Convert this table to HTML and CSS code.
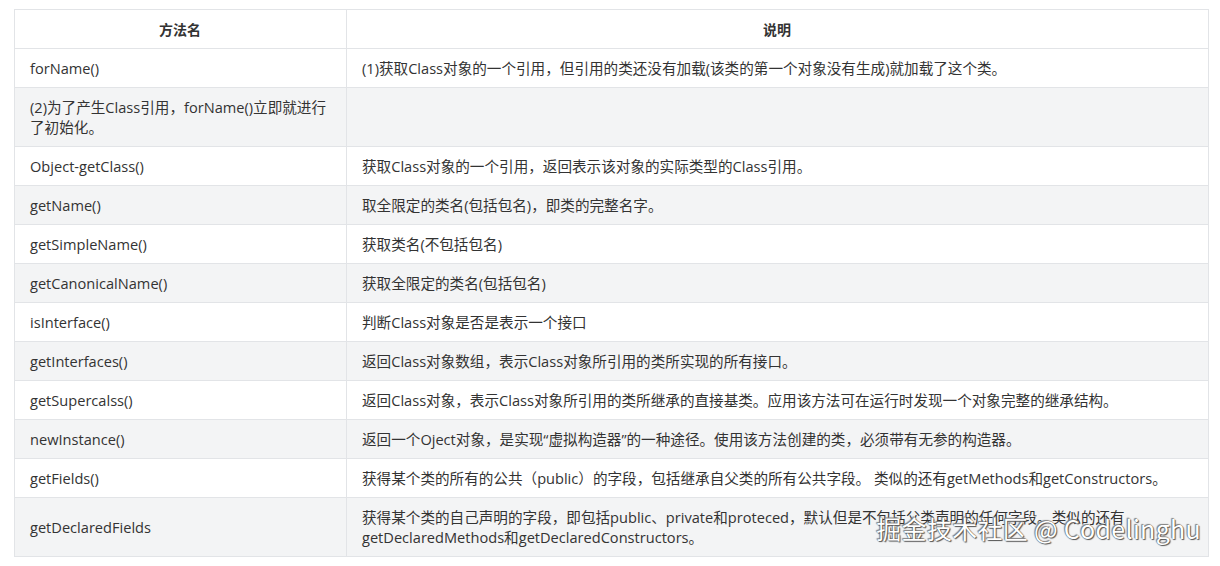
FILE: index.html
```html
<!DOCTYPE html>
<html lang="zh-CN">
<head>
<meta charset="utf-8">
<title>Class 方法</title>
<link rel="stylesheet" href="styles.css">
</head>
<body>
<div class="page">
  <table class="tbl">
    <thead>
      <tr><th class="c1">方法名</th><th>说明</th></tr>
    </thead>
    <tbody>
      <tr><td>forName()</td><td>(1)获取Class对象的一个引用，但引用的类还没有加载(该类的第一个对象没有生成)就加载了这个类。</td></tr>
      <tr><td class="nw">(2)为了产生Class引用，forName()立即就进行<br>了初始化。</td><td></td></tr>
      <tr><td>Object-getClass()</td><td>获取Class对象的一个引用，返回表示该对象的实际类型的Class引用。</td></tr>
      <tr><td>getName()</td><td>取全限定的类名(包括包名)，即类的完整名字。</td></tr>
      <tr><td>getSimpleName()</td><td>获取类名(不包括包名)</td></tr>
      <tr><td>getCanonicalName()</td><td>获取全限定的类名(包括包名)</td></tr>
      <tr><td>isInterface()</td><td>判断Class对象是否是表示一个接口</td></tr>
      <tr><td>getInterfaces()</td><td>返回Class对象数组，表示Class对象所引用的类所实现的所有接口。</td></tr>
      <tr><td>getSupercalss()</td><td>返回Class对象，表示Class对象所引用的类所继承的直接基类。应用该方法可在运行时发现一个对象完整的继承结构。</td></tr>
      <tr><td>newInstance()</td><td>返回一个Oject对象，是实现“虚拟构造器”的一种途径。使用该方法创建的类，必须带有无参的构造器。</td></tr>
      <tr><td>getFields()</td><td>获得某个类的所有的公共（public）的字段，包括继承自父类的所有公共字段。 类似的还有getMethods和getConstructors。</td></tr>
      <tr><td>getDeclaredFields</td><td class="nw">获得某个类的自己声明的字段，即包括public、private和proteced，默认但是不包括父类声明的任何字段。类似的还有<br>getDeclaredMethods和getDeclaredConstructors。</td></tr>
    </tbody>
  </table>
  <div class="watermark">掘金技术社区 @ Codelinghu</div>
</div>
</body>
</html>
```

FILE: styles.css
```css
html, body {
  margin: 0;
  padding: 0;
  background: #fff;
}
.page {
  position: relative;
  padding: 9px 12px 0 14px;
  font-family: "Open Sans", "Noto Sans CJK SC", sans-serif;
  font-size: 14.6px;
  color: #333;
}
.tbl {
  width: 1195px;
  border-collapse: collapse;
  table-layout: fixed;
}
.tbl th, .tbl td {
  border: 1px solid #e2e4e7;
  padding: 9px 16px 9px 15px;
  line-height: 20px;
  text-align: left;
  vertical-align: middle;
}
.tbl th {
  text-align: center;
  font-weight: bold;
  font-size: 14px;
  font-family: "Noto Sans CJK SC", sans-serif;
}
.tbl .c1 {
  width: 300px;
}
.tbl .nw {
  white-space: nowrap;
}
.tbl tbody tr:nth-child(2n) {
  background: #f3f4f5;
}
.watermark {
  position: absolute;
  right: 19px;
  top: 511px;
  font-family: "Noto Sans CJK SC", sans-serif;
  font-size: 25px;
  line-height: 34px;
  color: #fff;
  text-shadow: 0 0 1px #444, 1px 1px 1px #555, -1px -1px 1px #888;
  letter-spacing: 0.3px;
}
```
